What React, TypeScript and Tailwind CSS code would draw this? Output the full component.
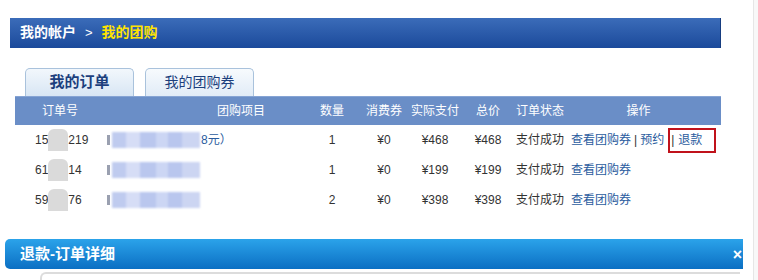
import React from "react";

const font = { fontFamily: '"Liberation Sans", "Noto Sans CJK SC", sans-serif' };

function Cell({ w, children, className = "" }: { w: string; children?: React.ReactNode; className?: string }) {
  return <div className={`${w} shrink-0 flex items-center whitespace-nowrap ${className}`}>{children}</div>;
}

function OrderNo({ a, b }: { a: string; b: string }) {
  return (
    <div className="flex items-center pl-[20px]">
      <span>{a}</span>
      <span className="inline-block w-[20px] h-[22px] bg-[#dadada] blur-[0.6px] rounded-t-[6px]" />
      <span>{b}</span>
    </div>
  );
}

function Blob({ tail, tailColor }: { tail?: string; tailColor?: string }) {
  return (
    <div className="flex items-center pl-[2px]">
      <span className="inline-block w-[3px] h-[10px] bg-[#9aa0b0] blur-[0.5px]" />
      <span className="relative inline-flex h-[16px] w-[88px] ml-[2px] bg-[#ccd5f2] blur-[1.2px]">
        <span className="w-[14px] h-full bg-[#bfcbef]" />
        <span className="w-[14px] h-full bg-[#d6ddf6]" />
        <span className="w-[16px] h-full bg-[#bac7ee]" />
        <span className="w-[12px] h-full bg-[#ccd6f4]" />
        <span className="w-[14px] h-full bg-[#b9c6ee]" />
      </span>
      {tail && <span className="ml-[1px]" style={{ color: tailColor }}>{tail}</span>}
    </div>
  );
}

const cols = ["w-[90px]", "w-[207px]", "w-[40px]", "w-[64px]", "w-[38px]", "w-[68px]", "w-[36px]", "w-[163px]"];

function Row({ no, item, qty, pay, total, ops }: { no: React.ReactNode; item: React.ReactNode; qty: string; pay: string; total: string; ops: React.ReactNode }) {
  return (
    <div className="flex h-[30px] ml-[15px] w-[706px] text-[12px] text-[#333333]">
      <Cell w={cols[0]}>{no}</Cell>
      <Cell w={cols[1]}>{item}</Cell>
      <Cell w={cols[2]} className="justify-center">{qty}</Cell>
      <Cell w={cols[3]} className="justify-center">¥0</Cell>
      <Cell w={cols[4]} className="justify-center">{pay}</Cell>
      <Cell w={cols[5]} className="justify-center">{total}</Cell>
      <Cell w={cols[6]} className="justify-center">支付成功</Cell>
      <Cell w={cols[7]} className="pl-[13px]">{ops}</Cell>
    </div>
  );
}

const link = "text-[#2b5c9e]";

export default function App() {
  return (
    <div className="w-[758px] h-[280px] bg-white overflow-hidden flex" style={font}>
      <div className="w-[753px] shrink-0 flex flex-col">
        <div className="mt-[18px] ml-[10px] w-[711px] h-[30px] bg-gradient-to-b from-[#3b6cb9] to-[#1b4a9b] border-r border-[#163d80] flex items-center pl-[10px] text-[14px] font-bold">
          <span className="text-white">我的帐户</span>
          <span className="text-white font-normal mx-[9px] text-[13px]">&gt;</span>
          <span className="text-[#ffe400]">我的团购</span>
        </div>

        <div className="mt-[20px] ml-[25px] flex gap-[11px] h-[28px]">
          <div className="w-[109px] h-[28px] rounded-t-[5px] border border-b-0 border-[#a9c2dc] bg-gradient-to-b from-[#f2f7fc] to-[#d8e6f4] flex items-center justify-center text-[15px] font-bold text-[#1c3f7d]">
            我的订单
          </div>
          <div className="w-[109px] h-[28px] rounded-t-[5px] border border-b-0 border-[#a9c2dc] bg-gradient-to-b from-[#f7fafd] to-[#e1ecf7] flex items-center justify-center text-[14px] text-[#1c3f7d]">
            我的团购券
          </div>
        </div>

        <div className="flex h-[30px] ml-[15px] w-[706px] bg-[#6a8ec7] border-t border-[#86a4d4] text-[12px] text-white">
          <Cell w={cols[0]} className="justify-center">订单号</Cell>
          <Cell w={cols[1]} className="pl-[112px]">团购项目</Cell>
          <Cell w={cols[2]} className="justify-center">数量</Cell>
          <Cell w={cols[3]} className="justify-center">消费券</Cell>
          <Cell w={cols[4]} className="justify-center">实际支付</Cell>
          <Cell w={cols[5]} className="justify-center">总价</Cell>
          <Cell w={cols[6]} className="justify-center">订单状态</Cell>
          <Cell w={cols[7]} className="justify-center pr-[2px]">操作</Cell>
        </div>

        <Row
          no={<OrderNo a="15" b="219" />}
          item={<Blob tail="8元）" tailColor="#2b5c9e" />}
          qty="1"
          pay="¥468"
          total="¥468"
          ops={
            <div className="flex items-center">
              <span className={link}>查看团购券</span>
              <span className="mx-[3px]">|</span>
              <span className={link}>预约</span>
              <span className="ml-[4px] h-[25px] w-[48px] border-2 border-[#c0121b] flex items-center pl-[1px]">
                <span>|</span>
                <span className={`${link} ml-[4px]`}>退款</span>
              </span>
            </div>
          }
        />
        <Row
          no={<OrderNo a="61" b="14" />}
          item={<Blob />}
          qty="1"
          pay="¥199"
          total="¥199"
          ops={<span className={link}>查看团购券</span>}
        />
        <Row
          no={<OrderNo a="59" b="76" />}
          item={<Blob tail="" />}
          qty="2"
          pay="¥398"
          total="¥398"
          ops={<span className={link}>查看团购券</span>}
        />

        <div className="mt-[25px] ml-[5px] w-[738px] h-[30px] rounded-l-[5px] bg-gradient-to-b from-[#2ba3ea] to-[#0b6fc3] flex items-center justify-between pl-[15px] pr-[1px] overflow-hidden">
          <span className="text-white font-bold text-[15px]">退款-订单详细</span>
          <span className="text-white font-bold text-[16px] leading-none mt-[2px]">×</span>
        </div>
        <div className="mt-[3px] ml-[40px] w-[700px] h-[8px] border-t-2 border-l-2 border-[#dcdcdc] rounded-tl-[6px]" />
      </div>
      <div className="flex-1 border-l border-[#e6e6e6] bg-[#f8f8f8]" />
    </div>
  );
}
